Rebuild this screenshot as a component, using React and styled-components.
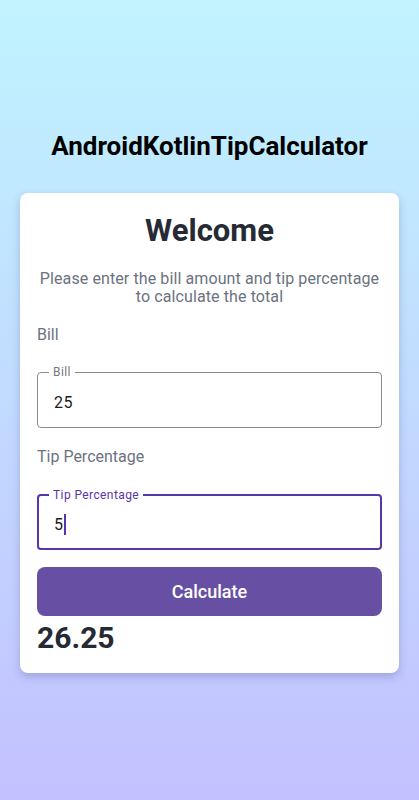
import React, { useState } from "react";
import styled, { createGlobalStyle } from "styled-components";

const GlobalStyle = createGlobalStyle`
  html, body {
    margin: 0;
    padding: 0;
  }
  body {
    font-family: Roboto, "Noto Sans", sans-serif;
  }
  * {
    box-sizing: border-box;
  }
`;

const Screen = styled.div`
  min-height: 800px;
  background: linear-gradient(180deg, #c0f4ff 0%, #c3c1ff 100%);
  display: flex;
  flex-direction: column;
  align-items: stretch;
  padding: 130px 20px 0;
`;

const AppTitle = styled.h1`
  margin: 0;
  font-size: 26px;
  font-weight: 700;
  line-height: 32px;
  color: #000;
  text-align: center;
`;

const Card = styled.div`
  margin-top: 31px;
  background: #fff;
  border-radius: 8px;
  box-shadow: 0 4px 8px rgba(60, 60, 120, 0.25);
  padding: 16px 17px 17px;
  display: flex;
  flex-direction: column;
`;

const Heading = styled.h2`
  margin: 0;
  font-size: 31px;
  font-weight: 700;
  line-height: 44px;
  color: #252a34;
  text-align: center;
`;

const Subtitle = styled.p`
  margin: 17px 0 0;
  font-size: 16px;
  line-height: 18px;
  letter-spacing: 0.1px;
  color: #6b7280;
  text-align: center;
`;

const FieldLabel = styled.div`
  margin-top: 17px;
  font-size: 16px;
  line-height: 24px;
  color: #6b7280;
`;

const Outlined = styled.div`
  margin-top: 25px;
  height: 56px;
  padding: 4px 16px 0;
  border: 1px solid #8a8a8e;
  border-radius: 4px;
  display: flex;
  align-items: center;
  position: relative;

  ${(p) =>
    p.$focused &&
    `
    border: 2px solid #5835a8;
    padding: 4px 15px 0;
  `}
`;

const FloatingLabel = styled.span`
  position: absolute;
  top: -7px;
  left: ${(p) => (p.$focused ? "10px" : "11px")};
  padding: 0 4px;
  background: #fff;
  font-size: 12px;
  line-height: 12px;
  letter-spacing: 0.4px;
  color: ${(p) => (p.$focused ? "#5835a8" : "#79767d")};
`;

const Input = styled.input`
  border: none;
  outline: none;
  background: transparent;
  width: 100%;
  padding: 0;
  font-family: Roboto, sans-serif;
  font-size: 16px;
  letter-spacing: 0.5px;
  color: #1c1b1f;
`;

const FakeValue = styled.div`
  font-size: 16px;
  letter-spacing: 0.5px;
  color: #1c1b1f;
  display: flex;
  align-items: center;
`;

const Caret = styled.span`
  display: inline-block;
  width: 2px;
  height: 21px;
  background: #5835a8;
  margin-left: 0px;
`;

const CalcButton = styled.button`
  margin-top: 17px;
  height: 49px;
  border: none;
  border-radius: 8px;
  background: #6750a4;
  color: #fff;
  font-family: Roboto, sans-serif;
  font-size: 18px;
  font-weight: 500;
  cursor: pointer;
`;

const Total = styled.div`
  margin-top: 4px;
  font-size: 30px;
  font-weight: 700;
  line-height: 36px;
  color: #252a34;
`;

function Field({ label, value, focused, onChange }) {
  return (
    <Outlined $focused={focused}>
      <FloatingLabel $focused={focused}>{label}</FloatingLabel>
      {focused ? (
        <FakeValue>
          {value}
          <Caret />
        </FakeValue>
      ) : (
        <Input value={value} onChange={(e) => onChange(e.target.value)} />
      )}
    </Outlined>
  );
}

export default function App() {
  const [bill, setBill] = useState("25");
  const [tip, setTip] = useState("5");
  const [total, setTotal] = useState("26.25");

  const calculate = () => {
    const b = parseFloat(bill) || 0;
    const t = parseFloat(tip) || 0;
    setTotal((b + (b * t) / 100).toFixed(2));
  };

  return (
    <>
      <GlobalStyle />
      <Screen>
        <AppTitle>AndroidKotlinTipCalculator</AppTitle>
        <Card>
          <Heading>Welcome</Heading>
          <Subtitle>
            Please enter the bill amount and tip percentage to calculate the
            total
          </Subtitle>
          <FieldLabel>Bill</FieldLabel>
          <Field label="Bill" value={bill} onChange={setBill} />
          <FieldLabel>Tip Percentage</FieldLabel>
          <Field label="Tip Percentage" value={tip} focused onChange={setTip} />
          <CalcButton onClick={calculate}>Calculate</CalcButton>
          <Total>{total}</Total>
        </Card>
      </Screen>
    </>
  );
}
